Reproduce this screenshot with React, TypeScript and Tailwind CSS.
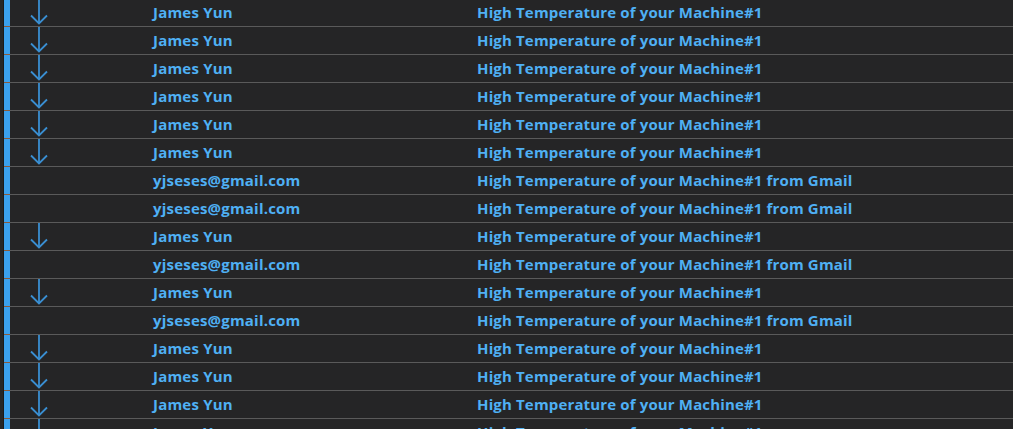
import React from 'react';

type Row = { from: string; subject: string; arrow: boolean };

const JAMES: Row = { from: 'James Yun', subject: 'High Temperature of your Machine#1', arrow: true };
const GMAIL: Row = { from: 'yjseses@gmail.com', subject: 'High Temperature of your Machine#1 from Gmail', arrow: false };

const rows: Row[] = [
  JAMES, JAMES, JAMES, JAMES, JAMES, JAMES,
  GMAIL, GMAIL, JAMES, GMAIL, JAMES, GMAIL,
  JAMES, JAMES, JAMES, JAMES,
];

const DownArrow = () => (
  <svg width="20" height="27" viewBox="0 0 20 27" fill="none" className="block">
    <path d="M10 0 V24.5" stroke="#3a8fd2" strokeWidth="1.8" />
    <path d="M2 16.5 L10 24.5 L18 16.5" stroke="#3a8fd2" strokeWidth="1.8" />
  </svg>
);

export default function App() {
  return (
    <div
      className="w-[1013px] h-[429px] overflow-hidden bg-[#252526]"
      style={{ fontFamily: '"Open Sans", "Noto Sans", sans-serif' }}
    >
      <div className="-mt-px">
        {rows.map((r, i) => (
          <div key={i} className="flex h-[28px]">
            <div className="w-[4px] bg-[#262626] border-r border-[#1a1a1a]" />
            <div className="w-[6px] bg-[#3ba1ee] border-b border-[#8a5a3a]" />
            <div className="flex flex-1 items-center border-b border-[#5a5a5a]">
              <div className="w-[143px] h-full flex items-start pl-[19px]">
                {r.arrow && <DownArrow />}
              </div>
              <div className="w-[324px] text-[15px] font-bold tracking-[0.2px] text-[#4fb0f4] leading-none">
                {r.from}
              </div>
              <div className="flex-1 text-[15px] font-bold tracking-[0.15px] text-[#4fb0f4] leading-none">
                {r.subject}
              </div>
            </div>
          </div>
        ))}
      </div>
    </div>
  );
}
